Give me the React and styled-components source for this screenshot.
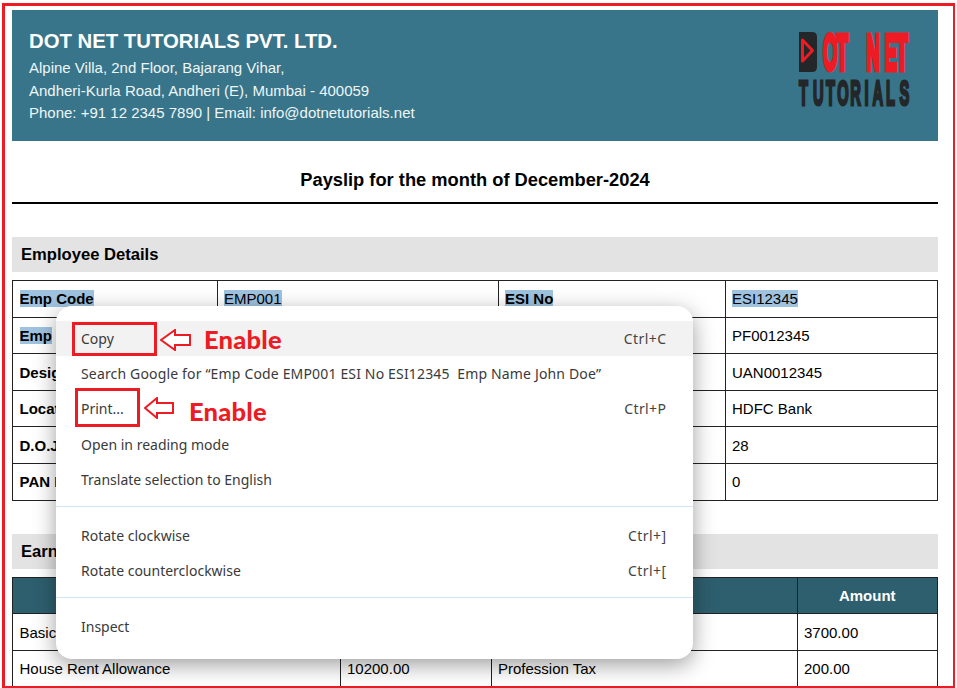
import React from "react";
import styled, { createGlobalStyle } from "styled-components";

const Global = createGlobalStyle`
  html, body { margin: 0; padding: 0; background: #fff; }
  body { font-family: "Liberation Sans", Arial, sans-serif; color: #000; }
`;
const Stage = styled.div`
  position: relative;
  width: 957px;
  height: 688px;
  overflow: hidden;
  background: #fff;
`;
const Frame = styled.main`
  box-sizing: border-box;
  width: 953px;
  height: 685px;
  margin: 3px 0 0 2px;
  padding: 4px 15px 0 7px;
  border: solid #ed1c24;
  border-width: 3px 2px 2px 3px;
  overflow: hidden;
`;
const Header = styled.header`
  display: flex;
  justify-content: space-between;
  height: 131px;
  box-sizing: border-box;
  padding: 18px 27px 0 17px;
  background: #38758a;
  color: #fff;
`;
const Company = styled.h1`
  margin: 0 0 3px;
  font-size: 20.33px;
  line-height: 26px;
  font-weight: 700;
`;
const Address = styled.p`
  margin: 0;
  font-size: 15px;
  line-height: 22.5px;
  color: #eef5f7;
`;
const PayTitle = styled.h2`
  margin: 0;
  padding: 28px 0 11px;
  height: 22px;
  line-height: 22px;
  font-size: 18.3px;
  font-weight: 700;
  text-align: center;
  border-bottom: 2px solid #000;
`;
const Section = styled.h3`
  margin: ${p => p.$top}px 0 8.1px;
  height: 35px;
  padding-left: 9px;
  line-height: 35px;
  font-size: 16.6px;
  font-weight: 700;
  background: #e3e3e3;
`;
const Table = styled.table`
  width: 925px;
  table-layout: fixed;
  border-collapse: collapse;
  font-size: 15px;
`;
const Cell = styled.td`
  height: 36.6px;
  padding: 0 7px 0 6.5px;
  box-sizing: border-box;
  border: 1px solid #222;
  font-weight: ${p => (p.$label ? 700 : 400)};
`;
const HeadCell = styled.th`
  height: 36.6px;
  padding: 0 7px;
  box-sizing: border-box;
  border: 1px solid #222;
  background: #2e5f6e;
  color: #fff;
  font-size: 15px;
  font-weight: 700;
  text-align: center;
`;
const Sel = styled.span`
  background: #9fc3df;
`;
const Menu = styled.nav`
  position: absolute;
  left: 56px;
  top: 306px;
  width: 637px;
  height: 353px;
  box-sizing: border-box;
  padding-top: 15px;
  background: #fff;
  border-radius: 16px;
  box-shadow: 0 6px 22px rgba(0, 0, 0, 0.38);
  font-family: "Noto Sans", "Open Sans", sans-serif;
  font-size: 14px;
  color: #3a3a3a;
`;
const Item = styled.div`
  display: flex;
  align-items: center;
  justify-content: space-between;
  height: 35.2px;
  padding: 0 26.6px 0 25px;
  white-space: pre;
  letter-spacing: ${p => (p.$wide ? "0.16px" : "0")};
  background: ${p => (p.$active ? "#f2f2f2" : "transparent")};
`;
const Keys = styled.span`
  color: #444;
  letter-spacing: 0.4px;
`;
const Divider = styled.hr`
  margin: 9px 0 11px;
  border: 0;
  height: 1px;
  background: #d3e3f5;
`;
const Mark = styled.div`
  position: absolute;
  box-sizing: border-box;
  left: ${p => p.$x}px;
  top: ${p => p.$y}px;
  width: ${p => p.$w}px;
  height: ${p => p.$h}px;
  border: 3px solid #ed1c24;
`;
const Enable = styled.span`
  position: absolute;
  left: ${p => p.$x}px;
  top: ${p => p.$y}px;
  font-family: "Lato", sans-serif;
  font-weight: 900;
  font-size: 25.5px;
  letter-spacing: 0.2px;
  line-height: 30px;
  color: #ed1c24;
`;
const ArrowSvg = styled.svg`
  position: absolute;
  left: ${p => p.$x}px;
  top: ${p => p.$y}px;
`;
const LogoSvg = styled.svg`
  flex: none;
  margin-top: 4px;
  overflow: visible;
`;

const Logo = () => (
  <LogoSvg width="114" height="76" viewBox="0 0 114 76">
    <path d="M2 0h13q5 0 5 5v30q0 5-5 5H2z" fill="#232729" />
    <path d="M5.5 8L15.5 18.5 5.5 29z" fill="#232729" stroke="#ed1c24" strokeWidth="3" strokeLinejoin="round" />
    <text
      transform="translate(0 38) scale(0.38 1)"
      x="68 104 170 182 230 261"
      fontFamily="Liberation Sans"
      fontWeight="700"
      fontSize="50"
      fill="#ed1c24"
      stroke="#ed1c24"
      strokeWidth="5"
    >OT NET</text>
    <text
      transform="translate(0 72.5) scale(0.42 1)"
      x="5 38 69 96 127 161 180 212 244"
      fontFamily="Liberation Sans"
      fontWeight="700"
      fontSize="35"
      fill="#232729"
      stroke="#232729"
      strokeWidth="3"
    >TUTORIALS</text>
  </LogoSvg>
);

const Arrow = ({ x, y, w, head }) => (
  <ArrowSvg $x={x} $y={y} width={w} height="22" viewBox={`0 0 ${w} 22`}>
    <path d={`M1 11L${head} 1V6H${w - 1}V16H${head}V21Z`} fill="#fff" stroke="#ed1c24" strokeWidth="2" />
  </ArrowSvg>
);

const details = [
  ["Emp Code", "EMP001", "ESI No", "ESI12345"],
  ["Emp Name", "John Doe", "PF No", "PF0012345"],
  ["Designation", "Developer", "UAN No", "UAN0012345"],
  ["Location", "Mumbai", "Bank Name", "HDFC Bank"],
  ["D.O.J", "01-01-2020", "Working Days", "28"],
  ["PAN No", "ABCDE1234F", "LOP Days", "0"],
];
const pay = [
  ["Basic Salary", "25500.00", "Provident Fund", "3700.00"],
  ["House Rent Allowance", "10200.00", "Profession Tax", "200.00"],
];

export default function App() {
  return (
    <Stage>
      <Global />
      <Frame>
        <Header>
          <div>
            <Company>DOT NET TUTORIALS PVT. LTD.</Company>
            <Address>Alpine Villa, 2nd Floor, Bajarang Vihar,</Address>
            <Address>Andheri-Kurla Road, Andheri (E), Mumbai - 400059</Address>
            <Address>Phone: +91 12 2345 7890 | Email: info@dotnetutorials.net</Address>
          </div>
          <Logo />
        </Header>
        <PayTitle>Payslip for the month of December-2024</PayTitle>
        <Section $top={33}>Employee Details</Section>
        <Table>
          <colgroup>
            <col style={{ width: 204.5 }} />
            <col style={{ width: 281 }} />
            <col style={{ width: 227 }} />
            <col style={{ width: 212.5 }} />
          </colgroup>
          <tbody>
            {details.map((r, i) => (
              <tr key={r[0]}>
                <Cell $label>{i === 0 ? <Sel>{r[0]}</Sel> : i === 1 ? <><Sel>Emp</Sel> Name</> : r[0]}</Cell>
                <Cell>{i === 0 ? <Sel>{r[1]}</Sel> : r[1]}</Cell>
                <Cell $label>{i === 0 ? <Sel>{r[2]}</Sel> : r[2]}</Cell>
                <Cell>{i === 0 ? <Sel>{r[3]}</Sel> : r[3]}</Cell>
              </tr>
            ))}
          </tbody>
        </Table>
        <Section $top={33}>Earnings</Section>
        <Table>
          <colgroup>
            <col style={{ width: 327.5 }} />
            <col style={{ width: 151 }} />
            <col style={{ width: 306 }} />
            <col style={{ width: 140.5 }} />
          </colgroup>
          <thead>
            <tr>
              <HeadCell>Earnings</HeadCell>
              <HeadCell>Amount</HeadCell>
              <HeadCell>Deductions</HeadCell>
              <HeadCell>Amount</HeadCell>
            </tr>
          </thead>
          <tbody>
            {pay.map(r => (
              <tr key={r[0]}>
                {r.map(v => <Cell key={v}>{v}</Cell>)}
              </tr>
            ))}
          </tbody>
        </Table>
      </Frame>
      <Menu>
        <Item $active>Copy<Keys>Ctrl+C</Keys></Item>
        <Item $wide>Search Google for “Emp Code EMP001 ESI No ESI12345  Emp Name John Doe”</Item>
        <Item>Print...<Keys>Ctrl+P</Keys></Item>
        <Item>Open in reading mode</Item>
        <Item>Translate selection to English</Item>
        <Divider />
        <Item>Rotate clockwise<Keys>Ctrl+]</Keys></Item>
        <Item>Rotate counterclockwise<Keys>Ctrl+[</Keys></Item>
        <Divider />
        <Item>Inspect</Item>
      </Menu>
      <Mark $x={72} $y={322} $w={85} $h={34} />
      <Mark $x={75} $y={388} $w={65} $h={39} />
      <Arrow x={160} y={329} w={31} head={15} />
      <Arrow x={144} y={397} w={30} head={13} />
      <Enable $x={204} $y={324}>Enable</Enable>
      <Enable $x={189} $y={396}>Enable</Enable>
    </Stage>
  );
}
